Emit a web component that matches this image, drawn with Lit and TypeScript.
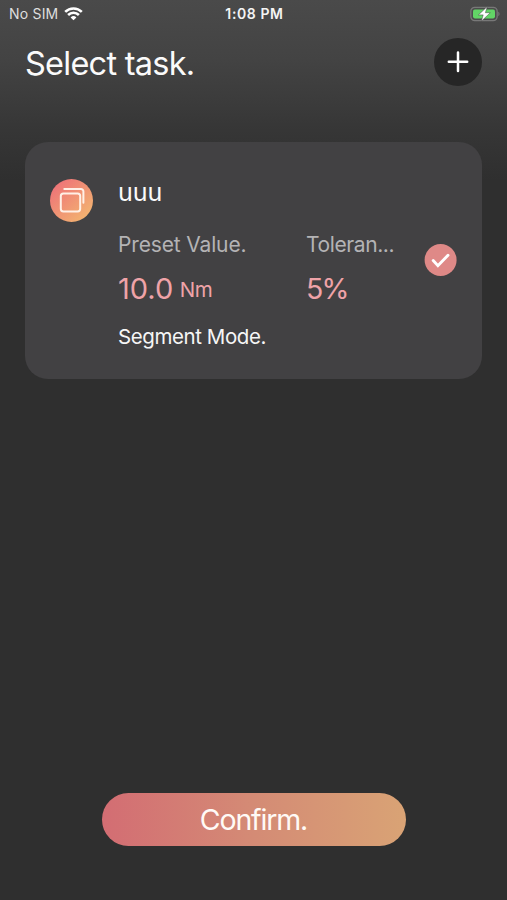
import { LitElement, html, css } from "lit";
import { customElement, property } from "lit/decorators.js";

@customElement("status-bar")
class StatusBar extends LitElement {
  static styles = css`
    :host { display: grid; grid-template-columns: 1fr auto 1fr; align-items: center; height: 27px; padding: 0 7px 0 9px; font-size: 14px; color: #f4f4f4; }
    .left { display: flex; align-items: center; gap: 6px; color: #dedede; letter-spacing: 0.2px; }
    .time { font-weight: 600; font-size: 14px; letter-spacing: 0.6px; }
    .right { display: flex; justify-content: flex-end; }
    svg { display: block; }
  `;
  render() {
    return html`
      <div class="left">
        <span>No SIM</span>
        <svg width="19" height="15" viewBox="0 0 19 15" fill="none" stroke="#fff" stroke-width="2.6">
          <path d="M1.2 5.9a11.8 11.8 0 0 1 16.6 0" />
          <path d="M4.1 9a7.7 7.7 0 0 1 10.8 0" />
          <path d="M9.5 14.3l-2.9-2.9a4.1 4.1 0 0 1 5.8 0z" fill="#fff" stroke="none" />
        </svg>
      </div>
      <span class="time">1:08 PM</span>
      <div class="right">
        <svg width="30" height="16" viewBox="0 0 30 16">
          <rect x="0.8" y="1.4" width="26.4" height="13.2" rx="4" fill="#4c4c4c" stroke="#787878" stroke-width="1.3" />
          <rect x="3" y="3.6" width="22" height="8.8" rx="1.8" fill="#62d566" />
          <path d="M28.3 5.8c1.6.6 1.6 3.8 0 4.4z" fill="#787878" />
          <path d="M17.3.6L8.4 8.9h4.8l-1.9 6.4 9-8.6h-4.9z" fill="#fff" stroke="#444" stroke-width="0.5" />
        </svg>
      </div>
    `;
  }
}

@customElement("task-card")
class TaskCard extends LitElement {
  @property() name = "";
  @property() preset = "";
  @property() unit = "";
  @property() tolerance = "";
  @property() mode = "";

  static styles = css`
    :host { display: grid; grid-template-columns: 43px 1fr 33px; column-gap: 25px; height: 237px; padding: 0 25px; box-sizing: border-box; border-radius: 23px; background: #424143; }
    svg { display: block; }
    .kind { padding-top: 37px; }
    .body { display: grid; grid-template-columns: 188px 1fr; grid-template-rows: 32px 50px 49px 43px; padding-top: 34px; align-content: start; min-width: 0; white-space: nowrap; }
    .wide { grid-column: 1 / -1; }
    .name { font-size: 25px; line-height: 32px; color: #fafafa; }
    .label { align-self: end; font-size: 21px; line-height: 26px; letter-spacing: -0.15px; color: #b4b3b5; }
    .label.narrow { letter-spacing: -0.4px; }
    .value { display: flex; align-items: center; align-self: end; font-size: 29px; line-height: 34px; color: #efa3a8; }
    .percent { font-size: 28.5px; line-height: 36px; letter-spacing: -1.9px; }
    .unit { font-size: 20.5px; margin-left: 6.5px; padding-top: 2px; letter-spacing: -0.5px; }
    .mode { align-self: end; font-size: 20.5px; line-height: 26px; letter-spacing: -0.42px; color: #f6f6f6; }
    .check { align-self: center; }
  `;
  render() {
    return html`
      <div class="kind">
        <svg width="43" height="43" viewBox="0 0 43 43">
          <defs>
            <linearGradient id="g" x1="0.15" y1="0.1" x2="0.9" y2="0.9">
              <stop offset="0" stop-color="#ee7478" />
              <stop offset="1" stop-color="#f3b570" />
            </linearGradient>
          </defs>
          <circle cx="21.5" cy="21.5" r="21.5" fill="url(#g)" />
          <g fill="none" stroke="#fff0e6" stroke-width="2" stroke-linecap="round">
            <rect x="10.8" y="14.4" width="19.4" height="18" rx="2.6" />
            <path d="M14.3 10.1H31a2.4 2.4 0 0 1 2.4 2.4v11.2" />
          </g>
        </svg>
      </div>
      <div class="body">
        <div class="name wide">${this.name}</div>
        <div class="label">Preset Value.</div>
        <div class="label narrow">Toleran...</div>
        <div class="value"><span>${this.preset}</span><span class="unit">${this.unit}</span></div>
        <div class="value percent">${this.tolerance}</div>
        <div class="mode wide">${this.mode}</div>
      </div>
      <svg class="check" width="33" height="33" viewBox="0 0 33 33">
        <circle cx="16.6" cy="16" r="16" fill="#df8987" />
        <path d="M9.2 16.6l4.7 5.1L24 11.2" fill="none" stroke="#fff" stroke-width="2.9" stroke-linecap="round" />
      </svg>
    `;
  }
}

@customElement("app-root")
class AppRoot extends LitElement {
  static styles = css`
    :host { display: flex; flex-direction: column; height: 900px; box-sizing: border-box; font-family: Inter, "Liberation Sans", sans-serif; background: linear-gradient(#4a4a4a 0, #434343 60px, #363636 130px, #2f2f2f 180px, #2f2f2f 100%); }
    header { display: flex; align-items: center; justify-content: space-between; height: 70px; padding: 0 25px; }
    h1 { margin: 3px 0 0; font-size: 32.5px; font-weight: 400; line-height: 40px; letter-spacing: -0.75px; color: #fafafa; }
    .add { display: block; width: 48px; height: 48px; border: 0; padding: 0; border-radius: 50%; background: #262626; }
    .add svg { display: block; }
    task-card { margin: 44.5px 25px 0; }
    .confirm { margin: auto auto 54px; width: 304px; height: 53px; padding: 0; border: 0; border-radius: 27px; background: linear-gradient(90deg, #d36d73, #d48b75 50%, #d9a375); color: #fffaf6; font: 28.5px/53px Inter, "Liberation Sans", sans-serif; letter-spacing: -1.15px; }
  `;
  render() {
    return html`
      <status-bar></status-bar>
      <header>
        <h1>Select task.</h1>
        <button class="add" aria-label="Add task">
          <svg width="48" height="48" viewBox="0 0 48 48" stroke="#fff" stroke-width="2.5" stroke-linecap="round">
            <path d="M14.8 23.8h18.4M24 14.6V33" />
          </svg>
        </button>
      </header>
      <task-card name="uuu" preset="10.0" unit="Nm" tolerance="5%" mode="Segment Mode."></task-card>
      <button class="confirm">Confirm.</button>
    `;
  }
}
